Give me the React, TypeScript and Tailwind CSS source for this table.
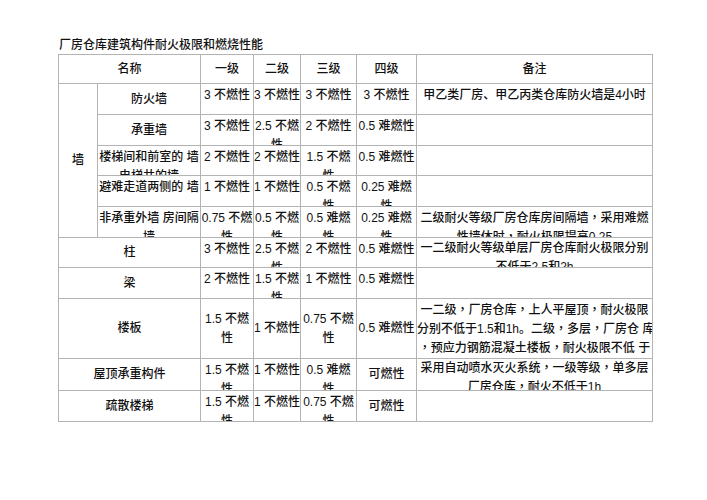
import React from 'react';

type Row = {
  name: string[];
  vals: string[][];
  remark?: string[];
  center?: boolean[];
  nameTop?: boolean;
  remarkPt?: string;
};

// 墙 sub rows
const WALL_ROWS: Row[] = [
  {
    name: ['防火墙'],
    vals: [['3 不燃性'], ['3 不燃性'], ['3 不燃性'], ['3 不燃性']],
    remark: ['甲乙类厂房、甲乙丙类仓库防火墙是4小时'],
  },
  {
    name: ['承重墙'],
    vals: [['3 不燃性'], ['2.5 不燃', '性'], ['2 不燃性'], ['0.5 难燃性']],
  },
  {
    name: ['楼梯间和前室的 墙', '电梯井的墙'],
    nameTop: true,
    vals: [['2 不燃性'], ['2 不燃性'], ['1.5 不燃', '性'], ['0.5 难燃性']],
  },
  {
    name: ['避难走道两侧的 墙'],
    nameTop: true,
    vals: [['1 不燃性'], ['1 不燃性'], ['0.5 不燃', '性'], ['0.25 难燃', '性']],
  },
  {
    name: ['非承重外墙 房间隔', '墙'],
    nameTop: true,
    vals: [['0.75 不燃', '性'], ['0.5 不燃', '性'], ['0.5 难燃', '性'], ['0.25 难燃', '性']],
    remark: ['二级耐火等级厂房仓库房间隔墙，采用难燃', '性墙体时，耐火极限提高0.25'],
  },
];

const OTHER_ROWS: Row[] = [
  {
    name: ['柱'],
    vals: [['3 不燃性'], ['2.5 不燃', '性'], ['2 不燃性'], ['0.5 难燃性']],
    remark: ['一二级耐火等级单层厂房仓库耐火极限分别', '不低于2.5和2h'],
    remarkPt: 'pt-px',
  },
  {
    name: ['梁'],
    vals: [['2 不燃性'], ['1.5 不燃', '性'], ['1 不燃性'], ['0.5 难燃性']],
  },
  {
    name: ['楼板'],
    vals: [['1.5 不燃', '性'], ['1 不燃性'], ['0.75 不燃', '性'], ['0.5 难燃性']],
    center: [true, true, true, true],
    remark: [
      '一二级，厂房仓库，上人平屋顶，耐火极限',
      '分别不低于1.5和1h。二级，多层，厂房仓 库',
      '，预应力钢筋混凝土楼板，耐火极限不低 于',
      '1h',
    ],
  },
  {
    name: ['屋顶承重构件'],
    vals: [['1.5 不燃', '性'], ['1 不燃性'], ['0.5 难燃', '性'], ['可燃性']],
    center: [false, false, false, true],
    remark: ['采用自动喷水灭火系统，一级等级，单多层', '厂房仓库，耐火不低于1h'],
    remarkPt: 'pt-0',
  },
  {
    name: ['疏散楼梯'],
    vals: [['1.5 不燃', '性'], ['1 不燃性'], ['0.75 不燃', '性'], ['可燃性']],
    center: [false, false, false, true],
  },
];

// full-width commas sit centred in the scan, as in a TC font
const Line = ({ text }: { text: string }) => (
  <div className="whitespace-pre">
    {text.split('，').map((part, i) => (
      <React.Fragment key={i}>
        {i > 0 && <span className="font-['Liberation_Sans','Noto_Sans_CJK_TC',sans-serif]">，</span>}
        {part}
      </React.Fragment>
    ))}
  </div>
);

const Cell = ({
  lines,
  center,
  className = '',
  pt = 'pt-[2px]',
}: {
  lines: string[];
  center?: boolean;
  className?: string;
  pt?: string;
}) => (
  <div
    className={`bg-white overflow-hidden text-center leading-[19px] ${
      center ? 'flex flex-col items-center justify-center' : pt
    } ${className}`}
  >
    {lines.map((l, i) => (
      <Line key={i} text={l} />
    ))}
  </div>
);

const renderRow = (r: Row, key: string, full: boolean) => (
  <React.Fragment key={key}>
    <Cell lines={r.name} center={!r.nameTop} className={full ? 'col-span-2' : ''} />
    {r.vals.map((v, i) => (
      <Cell key={i} lines={v} center={r.center?.[i]} />
    ))}
    <Cell lines={r.remark ?? []} pt={r.remarkPt ?? 'pt-[2px]'} />
  </React.Fragment>
);

export default function App() {
  return (
    <div className="w-[707px] h-[500px] bg-white pt-[36px] pl-[58px] text-[12px] font-medium text-[#111] font-['Liberation_Sans','Noto_Sans_CJK_SC',sans-serif]">
      <div className="h-[18px] leading-[18px] pl-px">厂房仓库建筑构件耐火极限和燃烧性能</div>
      <div className="grid w-max grid-cols-[38px_102px_52px_46px_55px_59px_235px] grid-rows-[28px_30px_30px_29px_30px_30px_29px_30px_59px_31px_30px] gap-px p-px bg-[#b3b3b3]">
        <Cell lines={['名称']} center className="col-span-2" />
        <Cell lines={['一级']} center />
        <Cell lines={['二级']} center />
        <Cell lines={['三级']} center />
        <Cell lines={['四级']} center />
        <Cell lines={['备注']} center />

        <Cell lines={['墙']} center className="row-span-5" />
        {WALL_ROWS.map((r, i) => renderRow(r, 'w' + i, false))}
        {OTHER_ROWS.map((r, i) => renderRow(r, 'o' + i, true))}
      </div>
    </div>
  );
}
